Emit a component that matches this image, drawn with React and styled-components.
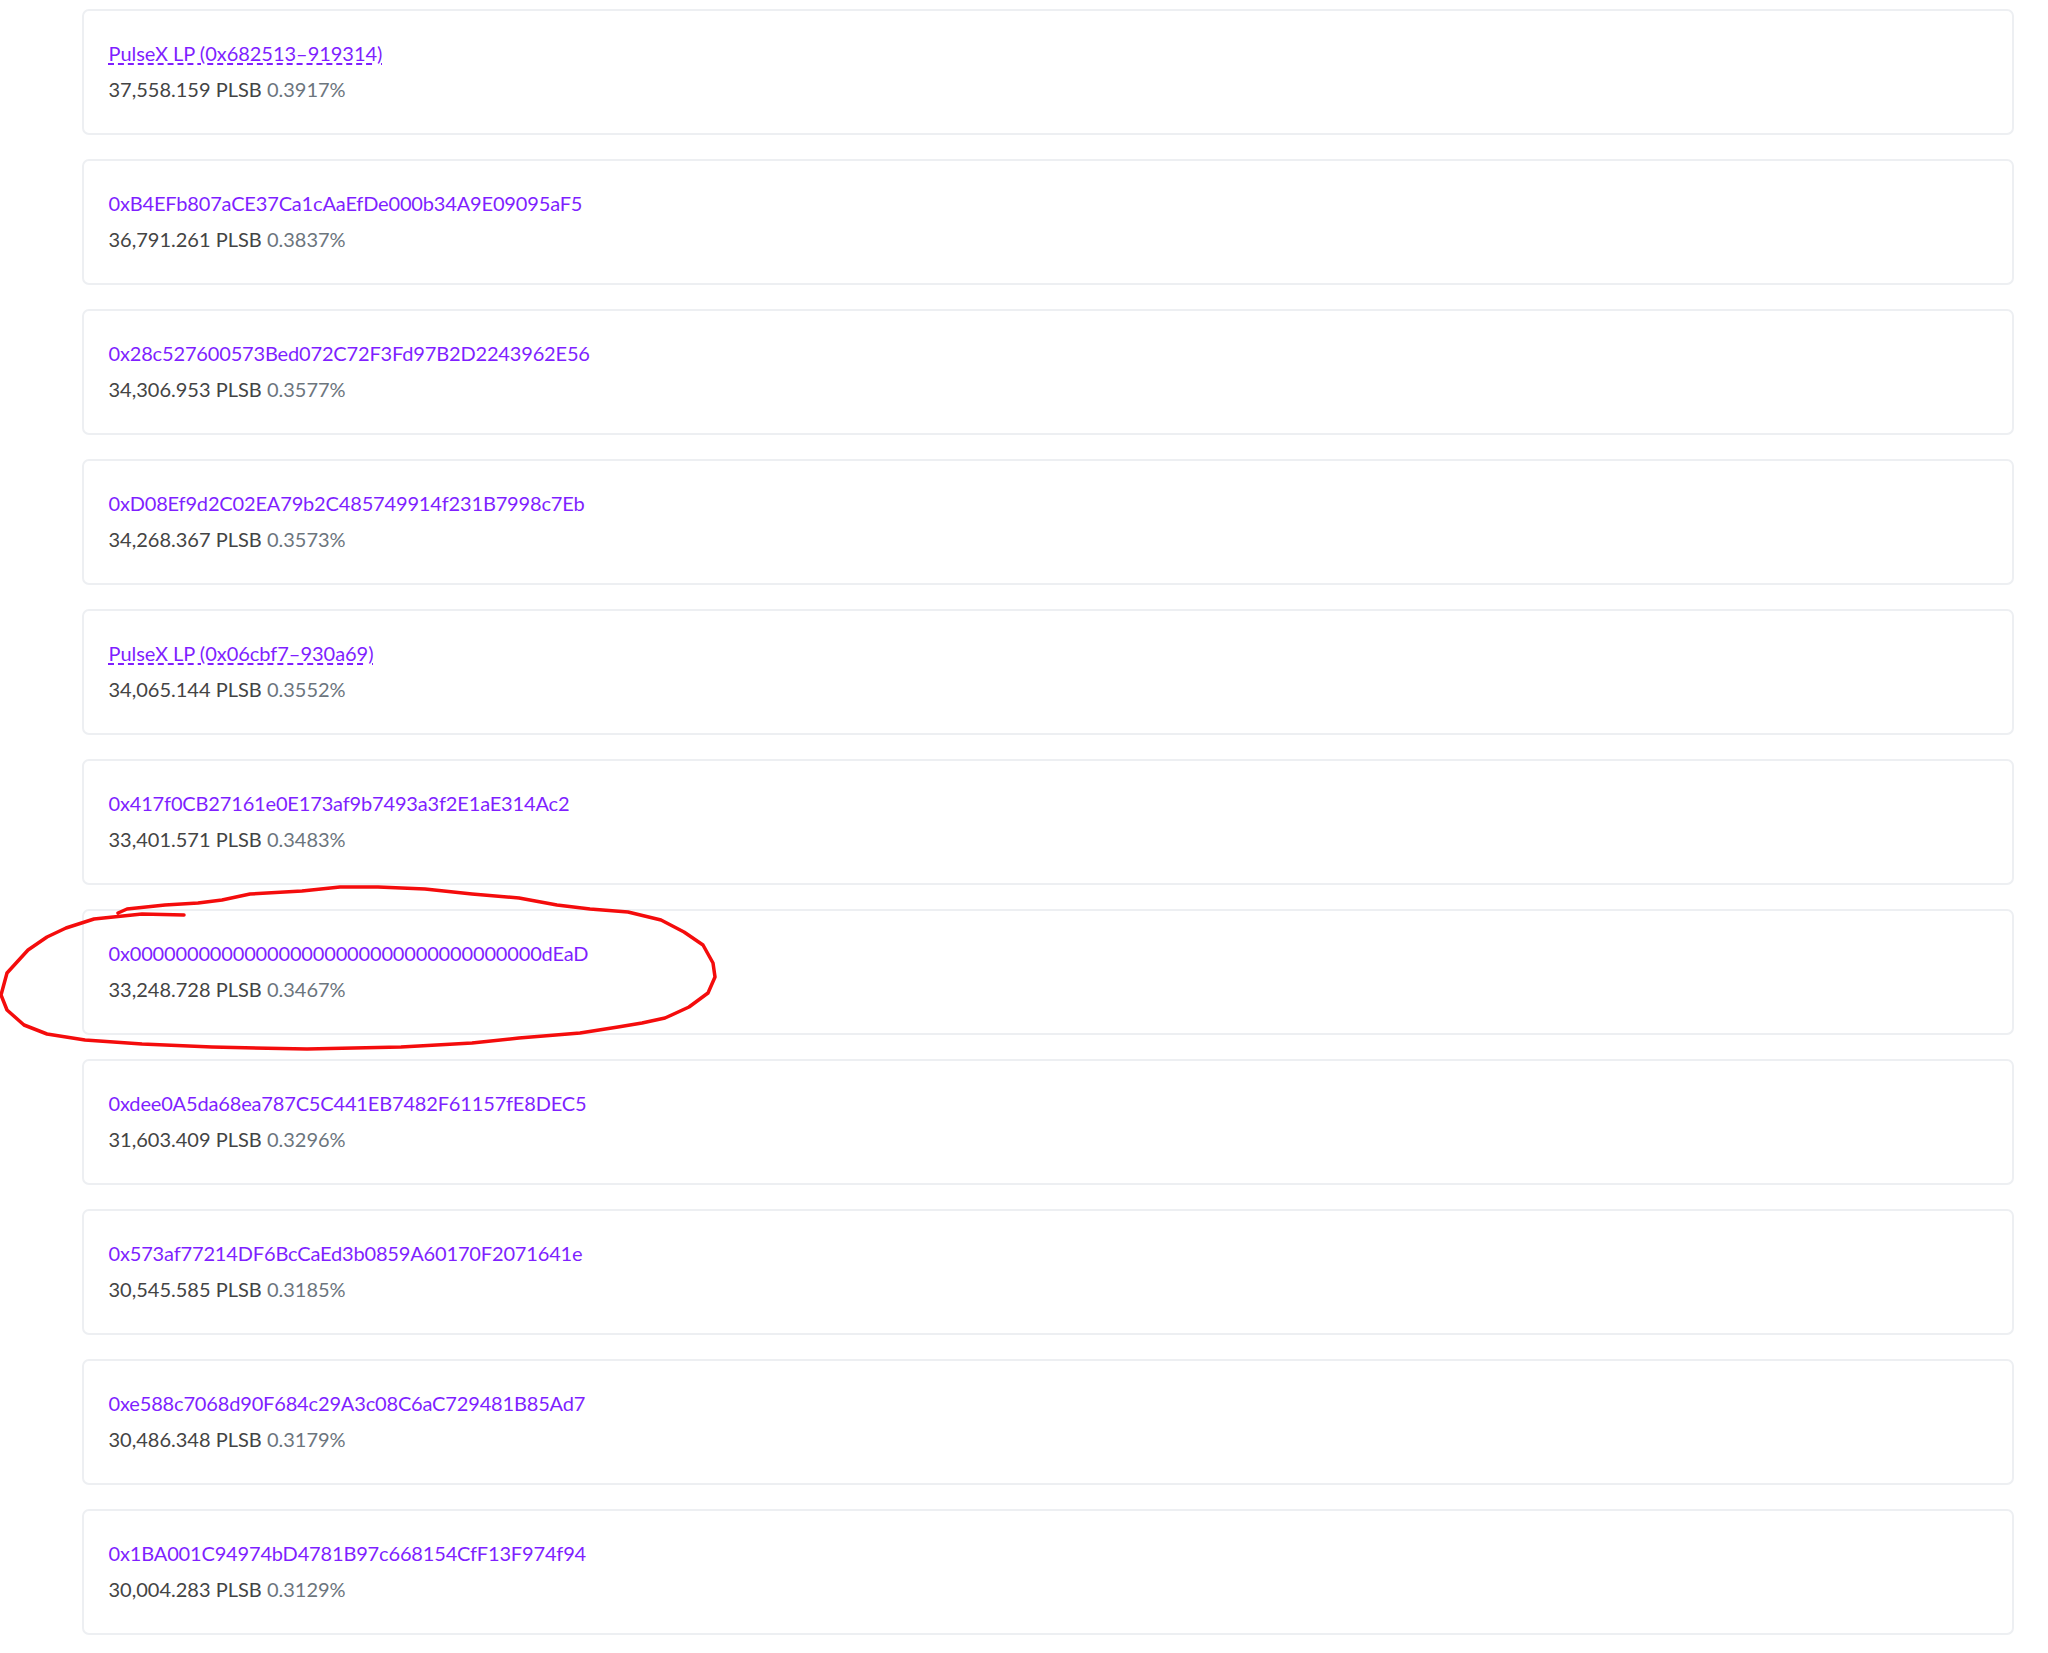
import React from 'react';
import styled, { createGlobalStyle } from 'styled-components';

const GlobalStyle = createGlobalStyle`
html, body {
  margin: 0;
  background: #fff;
}
body {
  font-family: "Lato", "Noto Sans", sans-serif;
  font-size: 20px;
  color: #444;
}
`;
const Page = styled.main`
position: relative;
height: 1653px;
overflow: hidden;
`;
const List = styled.ul`
list-style: none;
margin: 0;
padding: 9px 34px 0 82px;
display: flex;
flex-direction: column;
gap: 24px;
`;
const Card = styled.li`
box-sizing: border-box;
height: 126px;
padding: 26px 24.5px 0;
border: 2px solid #edeff2;
border-radius: 7px;
`;
const Holder = styled.a`
display: block;
height: 36px;
line-height: 32px;
color: #7f1fff;
letter-spacing: ${p => (p.$lp ? '-0.03px' : '-0.16px')};
`;
const Name = styled.span`
text-decoration: underline dashed #7f1fff 2px;
text-underline-offset: 2px;
`;
const Amount = styled.div`
line-height: 32px;
`;
const Share = styled.span`
color: #6c757d;
`;
const Scribble = styled.svg`
position: absolute;
left: 0;
top: 0;
pointer-events: none;
`;

const holders = [
  { address: 'PulseX LP (0x682513–919314)', lp: true, amount: '37,558.159', share: '0.3917%' },
  { address: '0xB4EFb807aCE37Ca1cAaEfDe000b34A9E09095aF5', amount: '36,791.261', share: '0.3837%' },
  { address: '0x28c527600573Bed072C72F3Fd97B2D2243962E56', amount: '34,306.953', share: '0.3577%' },
  { address: '0xD08Ef9d2C02EA79b2C485749914f231B7998c7Eb', amount: '34,268.367', share: '0.3573%' },
  { address: 'PulseX LP (0x06cbf7–930a69)', lp: true, amount: '34,065.144', share: '0.3552%' },
  { address: '0x417f0CB27161e0E173af9b7493a3f2E1aE314Ac2', amount: '33,401.571', share: '0.3483%' },
  { address: '0x000000000000000000000000000000000000dEaD', amount: '33,248.728', share: '0.3467%' },
  { address: '0xdee0A5da68ea787C5C441EB7482F61157fE8DEC5', amount: '31,603.409', share: '0.3296%' },
  { address: '0x573af77214DF6BcCaEd3b0859A60170F2071641e', amount: '30,545.585', share: '0.3185%' },
  { address: '0xe588c7068d90F684c29A3c08C6aC729481B85Ad7', amount: '30,486.348', share: '0.3179%' },
  { address: '0x1BA001C94974bD4781B97c668154CfF13F974f94', amount: '30,004.283', share: '0.3129%' },
];

// hand drawn ring round the dEaD address
const scribble = 'M118 913 L127 909 L165 905 L198 903 L222 900 L250 894 L302 891 L340 887 L378 887 L425 889 L472 894 L519 898 L557 905 L590 909 L628 912 L661 920 L684 932 L703 945 L713 963 L715 977 L708 993 L689 1007 L665 1018 L642 1023 L618 1027 L580 1033 L519 1038 L472 1043 L401 1047 L307 1049 L212 1047 L142 1044 L85 1040 L47 1034 L24 1025 L7 1010 L1 995 L7 973 L28 950 L47 937 L66 928 L94 919 L142 914 L184 915';

const App = () => <>
  <GlobalStyle />
  <Page>
    <List>
      {holders.map(h => (
        <Card key={h.address}>
          <Holder $lp={h.lp}>{h.lp ? <Name>{h.address}</Name> : h.address}</Holder>
          <Amount>{h.amount} PLSB <Share>{h.share}</Share></Amount>
        </Card>
      ))}
    </List>
    <Scribble width="740" height="1130" viewBox="0 0 740 1130">
      <path d={scribble} fill="none" stroke="#f40c0c" strokeWidth="3.5" strokeLinecap="round" strokeLinejoin="round" />
    </Scribble>
  </Page>
</>;

export default App;
